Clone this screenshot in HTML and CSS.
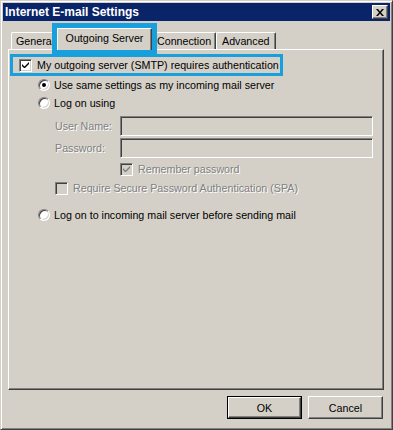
FILE: index.html
```html
<!DOCTYPE html>
<html>
<head>
<meta charset="utf-8">
<link rel="stylesheet" href="styles.css">
</head>
<body>
<div class="window">
  <div class="titlebar">
    <span class="title">Internet E-mail Settings</span>
    <span class="close">
      <svg width="8" height="7" viewBox="0 0 8 7"><path d="M0 0h2l2 2.5L6 0h2L5 3.5 8 7H6L4 4.5 2 7H0l3-3.5z" fill="#000"/></svg>
    </span>
  </div>
  <div class="tabs">
    <div class="tab tab-general">General</div>
    <div class="tab tab-active">Outgoing Server</div>
    <div class="tab tab-connection">Connection</div>
    <div class="tab tab-advanced">Advanced</div>
  </div>
  <div class="panel">
    <div class="highlight-row">
      <span class="checkbox checked"><svg width="7" height="7" viewBox="0 0 7 7"><path d="M0 2v2l2 2h1l4-4V0L2.5 4.5z" fill="#000"/></svg></span>
      <span class="label">My outgoing server (SMTP) requires authentication</span>
    </div>
    <div class="row radio-row first-radio">
      <span class="radio selected"></span>
      <span class="label">Use same settings as my incoming mail server</span>
    </div>
    <div class="row radio-row">
      <span class="radio"></span>
      <span class="label">Log on using</span>
    </div>
    <div class="field-row username-row">
      <span class="field-label disabled">User Name:</span>
      <span class="input"></span>
    </div>
    <div class="field-row password-row">
      <span class="field-label disabled">Password:</span>
      <span class="input"></span>
    </div>
    <div class="row remember-row">
      <span class="checkbox disabled-box"><svg width="7" height="7" viewBox="0 0 7 7"><path d="M0 2v2l2 2h1l4-4V0L2.5 4.5z" fill="#808080"/></svg></span>
      <span class="label disabled">Remember password</span>
    </div>
    <div class="row spa-row">
      <span class="checkbox disabled-box"></span>
      <span class="label disabled">Require Secure Password Authentication (SPA)</span>
    </div>
    <div class="row radio-row last-radio">
      <span class="radio"></span>
      <span class="label">Log on to incoming mail server before sending mail</span>
    </div>
  </div>
  <div class="buttons">
    <div class="button default"><span class="button-face">OK</span></div>
    <div class="button"><span class="button-face">Cancel</span></div>
  </div>
</div>
</body>
</html>
```
FILE: styles.css
```css
html, body {
  margin: 0;
  padding: 0;
  background: #d4d0c8;
}
body {
  font-family: "Liberation Sans", Arial, sans-serif;
  font-size: 10.7px;
  color: #000;
  white-space: nowrap;
}
.window {
  width: 393px;
  height: 430px;
  box-sizing: border-box;
  border: 1px solid;
  border-color: #d4d0c8 #404040 #404040 #d4d0c8;
  box-shadow: inset 1px 1px #fff, inset -1px -1px #808080;
  padding: 2px;
  background: #d4d0c8;
  display: flex;
  flex-direction: column;
}
.titlebar {
  height: 18px;
  background: #0a246a;
  display: flex;
  align-items: center;
  justify-content: space-between;
  padding: 0 2px 0 2px;
  flex-shrink: 0;
}
.title {
  color: #fff;
  font-weight: bold;
  font-size: 12px;
  line-height: 18px;
}
.close {
  width: 16px;
  height: 14px;
  box-sizing: border-box;
  background: #d4d0c8;
  border: 1px solid;
  border-color: #fff #404040 #404040 #fff;
  box-shadow: inset -1px -1px #808080;
  display: flex;
  align-items: center;
  justify-content: center;
  padding-right: 1px;
}
.close svg { display: block; }

.tabs {
  display: flex;
  align-items: flex-end;
  height: 22px;
  margin: 7px 0 -1px 8px;
  position: relative;
  z-index: 1;
  flex-shrink: 0;
}
.tab {
  height: 17px;
  margin-bottom: 1px;
  box-sizing: border-box;
  border-top: 1px solid #fff;
  border-left: 1px solid #fff;
  border-right: 1px solid #404040;
  box-shadow: inset -1px 0 #808080;
  border-radius: 2px 2px 0 0;
  padding-left: 4px;
  line-height: 16px;
  overflow: hidden;
  background: #d4d0c8;
}
.tab-general { width: 46px; }
.tab-active {
  width: 95px;
  height: 22px;
  margin-bottom: 0;
  padding-left: 0;
  border-radius: 0;
  text-align: center;
  line-height: 19px;
  outline: 5px solid #18a0dc;
  position: relative;
  z-index: 2;
}
.tab-connection { width: 64px; padding-left: 5px; border-left: none; }
.tab-advanced { width: 60px; padding-left: 5px; }

.panel {
  margin: 0 6px 0 5px;
  height: 341px;
  box-sizing: border-box;
  border: 1px solid;
  border-color: #fff #404040 #404040 #fff;
  box-shadow: inset -1px -1px #808080;
  display: flex;
  flex-direction: column;
  flex-shrink: 0;
}
.highlight-row {
  margin: 4px 0 0 1px;
  width: 273px;
  height: 22px;
  box-sizing: border-box;
  border: 3px solid #18a0dc;
  display: flex;
  align-items: center;
  padding-left: 6px;
  gap: 5px;
  position: relative;
  z-index: 3;
}
.row {
  display: flex;
  align-items: center;
  height: 18px;
}
.radio-row { margin-left: 29px; gap: 4px; }
.last-radio { margin-top: 9px; }
.field-row {
  display: flex;
  align-items: center;
  margin-left: 46px;
}
.username-row { margin-top: 4px; }
.password-row { margin-top: 2px; }
.field-label { width: 65px; }
.input {
  width: 253px;
  height: 20px;
  box-sizing: border-box;
  border: 1px solid;
  border-color: #808080 #fff #fff #808080;
  box-shadow: inset 1px 1px #404040, inset -1px -1px #d4d0c8;
  background: #d4d0c8;
}
.remember-row { margin-left: 111px; margin-top: 2px; gap: 5px; }
.spa-row { margin-left: 46px; margin-top: 1px; gap: 5px; }

.disabled {
  color: #808080;
  text-shadow: 1px 1px 0 #fff;
}
.checkbox {
  width: 13px;
  height: 13px;
  box-sizing: border-box;
  border: 1px solid;
  border-color: #808080 #fff #fff #808080;
  box-shadow: inset 1px 1px #404040, inset -1px -1px #d4d0c8;
  background: #fff;
  display: flex;
  align-items: center;
  justify-content: center;
  flex-shrink: 0;
}
.checkbox svg { display: block; }
.disabled-box { background: #d4d0c8; }
.radio {
  width: 12px;
  height: 12px;
  box-sizing: border-box;
  border-radius: 50%;
  border: 1px solid;
  border-color: #808080 #fff #fff #808080;
  box-shadow: inset 1px 1px #404040, inset -1px -1px #d4d0c8;
  background: #fff;
  display: flex;
  align-items: center;
  justify-content: center;
  flex-shrink: 0;
}
.radio.selected::after {
  content: "";
  width: 4px;
  height: 4px;
  border-radius: 50%;
  background: #000;
}

.buttons {
  display: flex;
  justify-content: flex-end;
  gap: 6px;
  margin: 6px 7px 0 0;
}
.button {
  width: 75px;
  height: 23px;
  box-sizing: border-box;
  border: 1px solid;
  border-color: #fff #404040 #404040 #fff;
  box-shadow: inset -1px -1px #808080;
  display: flex;
}
.button.default {
  border: 1px solid #000;
  box-shadow: none;
}
.button-face {
  flex: 1;
  display: flex;
  align-items: center;
  justify-content: center;
}
.button.default .button-face {
  border: 1px solid;
  border-color: #fff #404040 #404040 #fff;
  box-shadow: inset -1px -1px #808080;
}
```
